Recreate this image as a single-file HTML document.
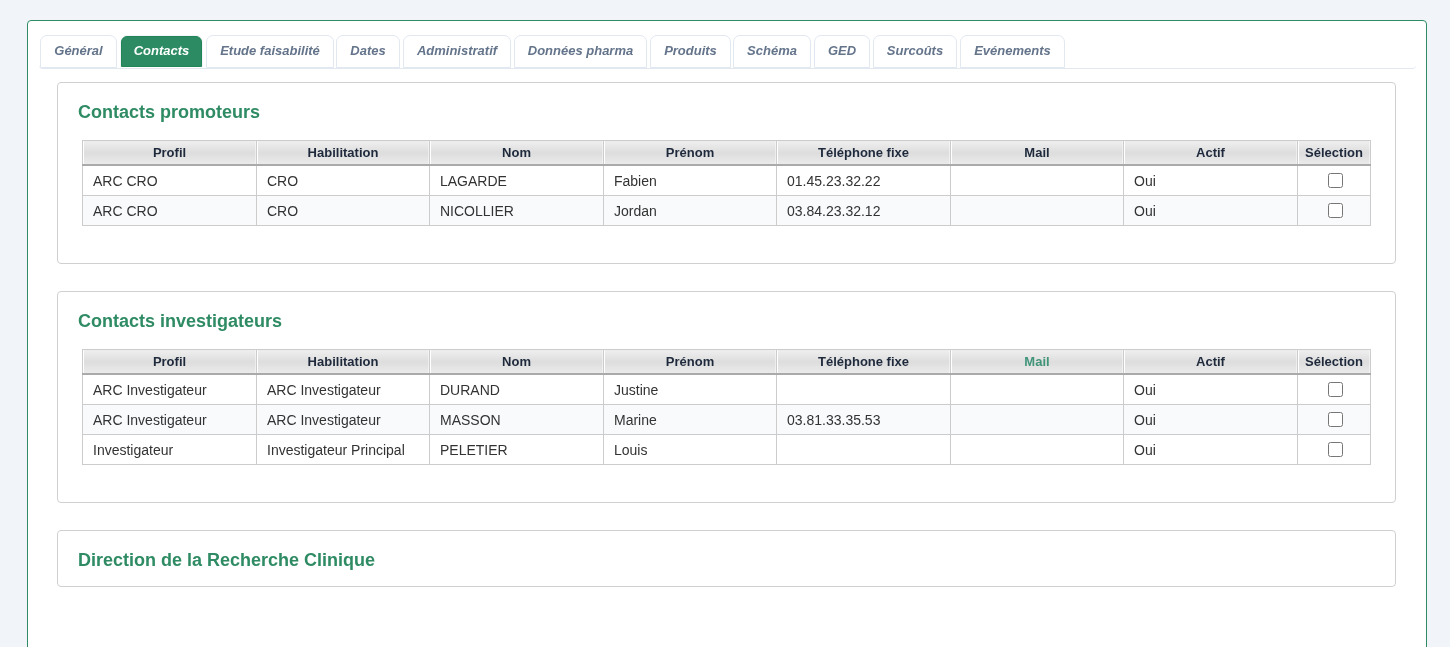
<!DOCTYPE html>
<html lang="fr">
<head>
<meta charset="utf-8">
<title>Contacts</title>
<style>
*{box-sizing:border-box}
html,body{margin:0;padding:0}
body{background:#f1f5f9;font-family:"Liberation Sans",Arial,sans-serif;font-size:14px;color:#333;width:1450px;height:647px;overflow:hidden;position:relative}
#aa{position:absolute;left:0;top:0;width:1450px;height:647px;will-change:transform}
#box{position:absolute;left:27px;top:20px;width:1400px;height:700px;background:#fff;border:1px solid #2e8b63;border-radius:4px}
#tabs{position:absolute;left:11px;top:14px;width:1377px;height:34px;border-bottom:1px solid #e2e8f0;border-radius:0 0 4px 4px;margin:0;padding:0;list-style:none;white-space:nowrap;font-size:13px}
#tabs li{position:absolute;top:0;height:33px;border:1px solid #e2e8f0;border-radius:7px 7px 0 0;background:#fff;color:#64748b;font-size:13px;font-weight:bold;font-style:italic;text-align:center;line-height:29px;padding:0}
#tabs li.on{border-color:#f4f5fb;border-bottom-color:#fff;color:#fff}
#tabs li.on span{display:block;height:31px;border:1px solid #208557;background:#2c8b63;border-radius:6px 6px 0 0;line-height:27px}
.panel{position:absolute;left:29px;width:1339px;border:1px solid #d0d0d0;border-radius:4px;background:#fff}
.panel h2{position:absolute;left:20px;top:19px;margin:0;font-size:18px;line-height:20px;font-weight:bold;color:#2e8b63;white-space:nowrap}
table{position:absolute;left:24px;top:57px;width:1288px;border-collapse:collapse;table-layout:fixed;font-size:14px}
th{height:24px;padding:0;border:1px solid #ccc;border-bottom:2px solid #aaa;font-size:13px;font-weight:bold;color:#1e293b;text-align:center;background:linear-gradient(#eeeeee 0%,#dddddd 50%,#ebebeb 100%);box-shadow:inset 1px 0 0 #fff,inset -1px 0 0 rgba(255,255,255,.45)}
td{height:30px;padding:0 0 0 10px;border:1px solid #ccc;color:#333;text-align:left}
tr.alt td{background:#f8fafc}
tbody tr:first-child td{height:31px;padding-top:2px}
tbody tr:first-child .cb{top:-2px}
td.c{padding:0;text-align:center}
.cb{display:inline-block;width:15px;height:15px;border:1px solid #767676;border-radius:2.5px;background:#fff;vertical-align:middle;position:relative;top:-1px;left:1px}
</style>
</head>
<body>
<div id="aa"><div id="box">
<ul id="tabs">
<li style="left:1px;width:77px">Général</li>
<li class="on" style="left:81px;width:83px"><span>Contacts</span></li>
<li style="left:167px;width:128px">Etude faisabilité</li>
<li style="left:297px;width:64px">Dates</li>
<li style="left:364px;width:108px">Administratif</li>
<li style="left:475px;width:133px">Données pharma</li>
<li style="left:611px;width:81px">Produits</li>
<li style="left:694px;width:78px">Schéma</li>
<li style="left:775px;width:56px">GED</li>
<li style="left:834px;width:84px">Surcoûts</li>
<li style="left:921px;width:105px">Evénements</li>
</ul>

<div class="panel" style="top:61px;height:182px">
<h2>Contacts promoteurs</h2>
<table>
<colgroup><col style="width:174px"><col style="width:173px"><col style="width:174px"><col style="width:173px"><col style="width:174px"><col style="width:173px"><col style="width:174px"><col style="width:73px"></colgroup>
<thead><tr><th>Profil</th><th>Habilitation</th><th>Nom</th><th>Prénom</th><th>Téléphone fixe</th><th>Mail</th><th>Actif</th><th>Sélection</th></tr></thead>
<tbody>
<tr><td>ARC CRO</td><td>CRO</td><td>LAGARDE</td><td>Fabien</td><td>01.45.23.32.22</td><td></td><td>Oui</td><td class="c"><span class="cb"></span></td></tr>
<tr class="alt"><td>ARC CRO</td><td>CRO</td><td>NICOLLIER</td><td>Jordan</td><td>03.84.23.32.12</td><td></td><td>Oui</td><td class="c"><span class="cb"></span></td></tr>
</tbody>
</table>
</div>

<div class="panel" style="top:270px;height:212px">
<h2>Contacts investigateurs</h2>
<table>
<colgroup><col style="width:174px"><col style="width:173px"><col style="width:174px"><col style="width:173px"><col style="width:174px"><col style="width:173px"><col style="width:174px"><col style="width:73px"></colgroup>
<thead><tr><th>Profil</th><th>Habilitation</th><th>Nom</th><th>Prénom</th><th>Téléphone fixe</th><th style="color:#40947a">Mail</th><th>Actif</th><th>Sélection</th></tr></thead>
<tbody>
<tr><td>ARC Investigateur</td><td>ARC Investigateur</td><td>DURAND</td><td>Justine</td><td></td><td></td><td>Oui</td><td class="c"><span class="cb"></span></td></tr>
<tr class="alt"><td>ARC Investigateur</td><td>ARC Investigateur</td><td>MASSON</td><td>Marine</td><td>03.81.33.35.53</td><td></td><td>Oui</td><td class="c"><span class="cb"></span></td></tr>
<tr><td>Investigateur</td><td>Investigateur Principal</td><td>PELETIER</td><td>Louis</td><td></td><td></td><td>Oui</td><td class="c"><span class="cb"></span></td></tr>
</tbody>
</table>
</div>

<div class="panel" style="top:509px;height:57px">
<h2>Direction de la Recherche Clinique</h2>
</div>
</div></div>
</body>
</html>
